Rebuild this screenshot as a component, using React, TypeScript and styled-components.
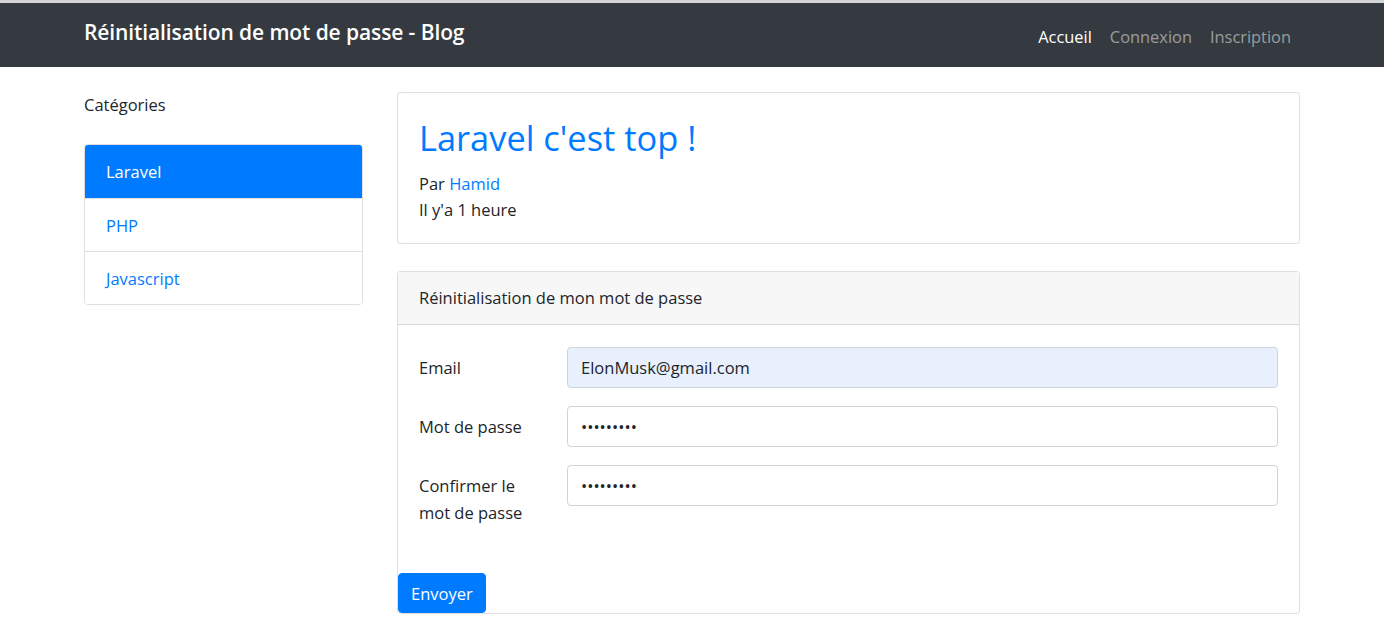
import React from "react";
import styled, { createGlobalStyle } from "styled-components";

const Global = createGlobalStyle`
  * { box-sizing: border-box; }
  html, body { margin: 0; padding: 0; background: #fff; }
  body {
    font-family: "Open Sans", "Noto Sans", "Liberation Sans", sans-serif;
    font-size: 16.5px;
    line-height: 1.5;
    color: #212529;
    border-top: 3px solid #d4d4d4;
  }
`;

const Navbar = styled.nav`
  background: #343a40;
  height: 64px;
`;

const NavInner = styled.div`
  max-width: 1216px;
  margin: 0 auto;
  height: 100%;
  display: flex;
  align-items: center;
  justify-content: space-between;
`;

const Brand = styled.a`
  color: #fff;
  font-size: 21px;
  font-weight: 600;
  letter-spacing: -0.1px;
  text-decoration: none;
  margin-top: -5px;
`;

const NavLinks = styled.div`
  display: flex;
  gap: 18px;
  padding-right: 9px;
  margin-top: 4px;
`;

const NavLink = styled.a<{ $active?: boolean }>`
  color: ${(p) => (p.$active ? "#fff" : "rgba(255,255,255,0.5)")};
  font-size: 16.4px;
  text-decoration: none;
`;

const Container = styled.div`
  max-width: 1216px;
  margin: 25px auto 0;
  display: grid;
  grid-template-columns: 279px 903px;
  column-gap: 34px;
  align-items: start;
`;

const Sidebar = styled.aside`
  display: flex;
  flex-direction: column;
`;

const SideTitle = styled.div`
  line-height: 26px;
  margin-bottom: 26px;
  margin-top: 0;
`;

const ListGroup = styled.div`
  border: 1px solid rgba(0, 0, 0, 0.125);
  border-radius: 4px;
  overflow: hidden;
`;

const ListItem = styled.a<{ $active?: boolean }>`
  display: block;
  height: 53px;
  line-height: 53px;
  padding: 0 21px;
  text-decoration: none;
  color: ${(p) => (p.$active ? "#fff" : "#007bff")};
  background: ${(p) => (p.$active ? "#007bff" : "#fff")};
  & + & {
    border-top: 1px solid rgba(0, 0, 0, 0.125);
  }
`;

const Main = styled.main`
  display: flex;
  flex-direction: column;
  gap: 27px;
`;

const Card = styled.section`
  border: 1px solid rgba(0, 0, 0, 0.125);
  border-radius: 4px;
  background: #fff;
`;

const PostBody = styled.div`
  padding: 22px 21px 20px;
`;

const PostTitle = styled.h1`
  margin: 0 0 11px;
  color: #007bff;
  font-size: 34.4px;
  font-weight: 500;
  line-height: 45px;
`;

const Meta = styled.div`
  line-height: 26px;
`;

const Link = styled.a`
  color: #007bff;
  text-decoration: none;
`;

const CardHeader = styled.div`
  background: #f7f7f7;
  border-bottom: 1px solid rgba(0, 0, 0, 0.125);
  height: 53px;
  padding: 0 21px;
  display: flex;
  align-items: center;
`;

const FormBody = styled.form`
  padding: 22px 21px 0;
  display: flex;
  flex-direction: column;
  gap: 18px;
`;

const FormRow = styled.div`
  display: grid;
  grid-template-columns: 148px 1fr;
  align-items: start;
`;

const Label = styled.label`
  line-height: 27px;
  padding-top: 7px;
  width: 118px;
`;

const Input = styled.input<{ $autofill?: boolean }>`
  height: 41px;
  width: 100%;
  border: 1px solid #ced4da;
  border-radius: 4px;
  padding: 0 13px;
  font-family: inherit;
  font-size: 16.5px;
  color: #212529;
  background: ${(p) => (p.$autofill ? "#e8f0fe" : "#fff")};
  outline: none;
`;

const ButtonRow = styled.div`
  margin-top: 47px;
`;

const Button = styled.button`
  background: #007bff;
  color: #fff;
  border: 1px solid #007bff;
  border-radius: 4px;
  height: 40px;
  padding: 0 12px;
  font-family: inherit;
  font-size: 16.5px;
  cursor: pointer;
  display: block;
`;

export default function App() {
  return (
    <>
      <Global />
      <Navbar>
        <NavInner>
          <Brand href="#">Réinitialisation de mot de passe - Blog</Brand>
          <NavLinks>
            <NavLink $active href="#">Accueil</NavLink>
            <NavLink href="#">Connexion</NavLink>
            <NavLink href="#">Inscription</NavLink>
          </NavLinks>
        </NavInner>
      </Navbar>
      <Container>
        <Sidebar>
          <SideTitle>Catégories</SideTitle>
          <ListGroup>
            <ListItem $active href="#">Laravel</ListItem>
            <ListItem href="#">PHP</ListItem>
            <ListItem href="#">Javascript</ListItem>
          </ListGroup>
        </Sidebar>
        <Main>
          <Card>
            <PostBody>
              <PostTitle>Laravel c'est top !</PostTitle>
              <Meta>
                Par <Link href="#">Hamid</Link>
              </Meta>
              <Meta>Il y'a 1 heure</Meta>
            </PostBody>
          </Card>
          <Card>
            <CardHeader>Réinitialisation de mon mot de passe</CardHeader>
            <FormBody onSubmit={(e) => e.preventDefault()}>
              <FormRow>
                <Label>Email</Label>
                <Input $autofill type="email" defaultValue="ElonMusk@gmail.com" />
              </FormRow>
              <FormRow>
                <Label>Mot de passe</Label>
                <Input type="password" defaultValue="secretpw1" />
              </FormRow>
              <FormRow>
                <Label>Confirmer le mot de passe</Label>
                <Input type="password" defaultValue="secretpw1" />
              </FormRow>
            </FormBody>
            <ButtonRow>
              <Button type="button">Envoyer</Button>
            </ButtonRow>
          </Card>
        </Main>
      </Container>
    </>
  );
}
